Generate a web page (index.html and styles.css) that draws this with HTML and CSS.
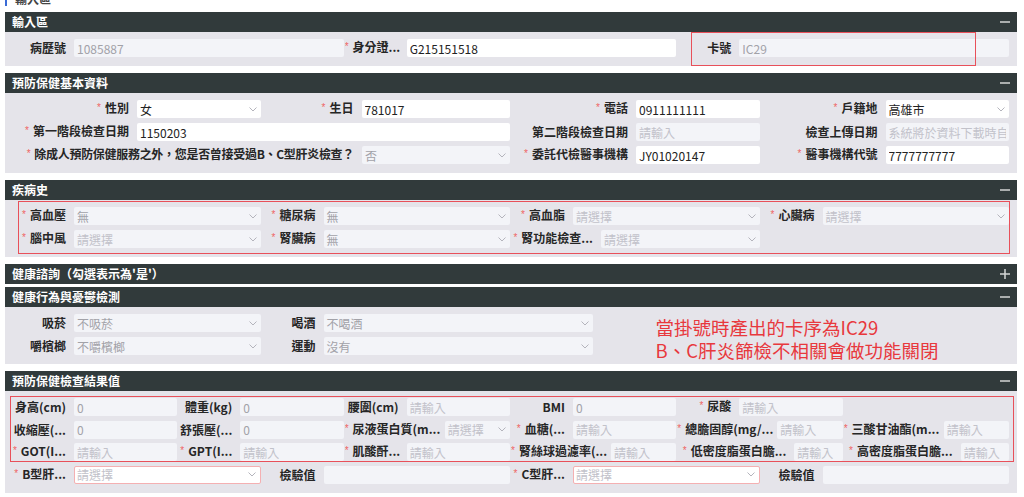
FILE: index.html
```html
<!DOCTYPE html>
<html lang="zh-Hant">
<head>
<meta charset="utf-8">
<title>預防保健</title>
<link rel="stylesheet" href="styles.css">
</head>
<body>
<div class="page">
  <div class="crumb"><span class="crumb-text">輸入區</span></div>

  <section class="panel">
    <header class="phead"><span>輸入區</span><svg class="tog" viewBox="0 0 10 10"><path d="M0 5H10"/></svg></header>
    <div class="pbody">
      <div class="grid g3">
        <div class="field"><label class="lbl">病歷號</label><input class="inp" disabled value="1085887"></div>
        <div class="field"><label class="lbl req">身分證...</label><input class="inp" value="G215151518"></div>
        <div class="field"><label class="lbl">卡號</label><input class="inp" disabled value="IC29"></div>
      </div>
      <div class="mark mark-card"></div>
    </div>
  </section>

  <section class="panel">
    <header class="phead"><span>預防保健基本資料</span><svg class="tog" viewBox="0 0 10 10"><path d="M0 5H10"/></svg></header>
    <div class="pbody">
      <div class="grid g4">
        <div class="field"><label class="lbl req w125">性別</label><div class="sel"><span>女</span><svg class="chev" viewBox="0 0 8 5"><path d="M0.5 0.5L4 4L7.5 0.5"/></svg></div></div>
        <div class="field"><label class="lbl req w100">生日</label><input class="inp" value="781017"></div>
        <div class="field"><label class="lbl req w125">電話</label><input class="inp" value="0911111111"></div>
        <div class="field"><label class="lbl req w125">戶籍地</label><div class="sel"><span>高雄市</span><svg class="chev" viewBox="0 0 8 5"><path d="M0.5 0.5L4 4L7.5 0.5"/></svg></div></div>

        <div class="field span2"><label class="lbl req w125">第一階段檢查日期</label><input class="inp" value="1150203"></div>
        <div class="field"><label class="lbl w125">第二階段檢查日期</label><input class="inp" disabled placeholder="請輸入"></div>
        <div class="field"><label class="lbl w125">檢查上傳日期</label><input class="inp" disabled placeholder="系統將於資料下載時自動產生"></div>

        <div class="field span2"><label class="lbl req w350">除成人預防保健服務之外，您是否曾接受過B、C型肝炎檢查？</label><div class="sel dis"><span>否</span><svg class="chev" viewBox="0 0 8 5"><path d="M0.5 0.5L4 4L7.5 0.5"/></svg></div></div>
        <div class="field"><label class="lbl req w125">委託代檢醫事機構</label><input class="inp" value="JY01020147"></div>
        <div class="field"><label class="lbl req w125">醫事機構代號</label><input class="inp" value="7777777777"></div>
      </div>
    </div>
  </section>

  <section class="panel">
    <header class="phead"><span>疾病史</span><svg class="tog" viewBox="0 0 10 10"><path d="M0 5H10"/></svg></header>
    <div class="pbody">
      <div class="grid g4">
        <div class="field"><label class="lbl req">高血壓</label><div class="sel dis"><span>無</span><svg class="chev" viewBox="0 0 8 5"><path d="M0.5 0.5L4 4L7.5 0.5"/></svg></div></div>
        <div class="field"><label class="lbl req">糖尿病</label><div class="sel dis"><span>無</span><svg class="chev" viewBox="0 0 8 5"><path d="M0.5 0.5L4 4L7.5 0.5"/></svg></div></div>
        <div class="field"><label class="lbl req">高血脂</label><div class="sel dis ph"><span>請選擇</span><svg class="chev" viewBox="0 0 8 5"><path d="M0.5 0.5L4 4L7.5 0.5"/></svg></div></div>
        <div class="field"><label class="lbl req">心臟病</label><div class="sel dis ph"><span>請選擇</span><svg class="chev" viewBox="0 0 8 5"><path d="M0.5 0.5L4 4L7.5 0.5"/></svg></div></div>

        <div class="field"><label class="lbl req">腦中風</label><div class="sel dis ph"><span>請選擇</span><svg class="chev" viewBox="0 0 8 5"><path d="M0.5 0.5L4 4L7.5 0.5"/></svg></div></div>
        <div class="field"><label class="lbl req">腎臟病</label><div class="sel dis"><span>無</span><svg class="chev" viewBox="0 0 8 5"><path d="M0.5 0.5L4 4L7.5 0.5"/></svg></div></div>
        <div class="field"><label class="lbl req w90">腎功能檢查...</label><div class="sel dis ph"><span>請選擇</span><svg class="chev" viewBox="0 0 8 5"><path d="M0.5 0.5L4 4L7.5 0.5"/></svg></div></div>
      </div>
      <div class="mark mark-disease"></div>
    </div>
  </section>

  <section class="panel collapsed">
    <header class="phead"><span>健康諮詢（勾選表示為'是'）</span><svg class="tog" viewBox="0 0 10 10"><path d="M0 5H10M5 0V10"/></svg></header>
  </section>

  <section class="panel">
    <header class="phead"><span>健康行為與憂鬱檢測</span><svg class="tog" viewBox="0 0 10 10"><path d="M0 5H10"/></svg></header>
    <div class="pbody">
      <div class="grid gbeh">
        <div class="field"><label class="lbl">吸菸</label><div class="sel dis"><span>不吸菸</span><svg class="chev" viewBox="0 0 8 5"><path d="M0.5 0.5L4 4L7.5 0.5"/></svg></div></div>
        <div class="field"><label class="lbl">喝酒</label><div class="sel dis"><span>不喝酒</span><svg class="chev" viewBox="0 0 8 5"><path d="M0.5 0.5L4 4L7.5 0.5"/></svg></div></div>
        <div class="note"><p class="note-line">當掛號時產出的卡序為IC29</p><p class="note-line">B、C肝炎篩檢不相關會做功能關閉</p></div>
        <div class="field"><label class="lbl">嚼檳榔</label><div class="sel dis"><span>不嚼檳榔</span><svg class="chev" viewBox="0 0 8 5"><path d="M0.5 0.5L4 4L7.5 0.5"/></svg></div></div>
        <div class="field"><label class="lbl">運動</label><div class="sel dis"><span>沒有</span><svg class="chev" viewBox="0 0 8 5"><path d="M0.5 0.5L4 4L7.5 0.5"/></svg></div></div>
      </div>
    </div>
  </section>

  <section class="panel">
    <header class="phead"><span>預防保健檢查結果值</span><svg class="tog" viewBox="0 0 10 10"><path d="M0 5H10"/></svg></header>
    <div class="pbody">
      <div class="grid g6">
        <div class="field"><label class="lbl">身高(cm)</label><input class="inp" disabled value="0"></div>
        <div class="field"><label class="lbl">體重(kg)</label><input class="inp" disabled value="0"></div>
        <div class="field"><label class="lbl">腰圍(cm)</label><input class="inp" disabled placeholder="請輸入"></div>
        <div class="field"><label class="lbl">BMI</label><input class="inp" disabled value="0"></div>
        <div class="field"><label class="lbl req">尿酸</label><input class="inp" disabled placeholder="請輸入"></div>
        <div class="field empty"></div>

        <div class="field"><label class="lbl">收縮壓(...</label><input class="inp" disabled value="0"></div>
        <div class="field"><label class="lbl">舒張壓(...</label><input class="inp" disabled value="0"></div>
        <div class="field"><label class="lbl req w100">尿液蛋白質(m...</label><div class="sel dis ph"><span>請選擇</span><svg class="chev" viewBox="0 0 8 5"><path d="M0.5 0.5L4 4L7.5 0.5"/></svg></div></div>
        <div class="field"><label class="lbl req">血糖(...</label><input class="inp" disabled placeholder="請輸入"></div>
        <div class="field"><label class="lbl req w100">總膽固醇(mg/...</label><input class="inp" disabled placeholder="請輸入"></div>
        <div class="field"><label class="lbl req w100">三酸甘油酯(m...</label><input class="inp" disabled placeholder="請輸入"></div>

        <div class="field"><label class="lbl req">GOT(I...</label><input class="inp" disabled placeholder="請輸入"></div>
        <div class="field"><label class="lbl req">GPT(I...</label><input class="inp" disabled placeholder="請輸入"></div>
        <div class="field"><label class="lbl req">肌酸酐...</label><input class="inp" disabled placeholder="請輸入"></div>
        <div class="field"><label class="lbl req w100">腎絲球過濾率(...</label><input class="inp" disabled placeholder="請輸入"></div>
        <div class="field"><label class="lbl req w117">低密度脂蛋白膽...</label><input class="inp" disabled placeholder="請輸入"></div>
        <div class="field"><label class="lbl req w117">高密度脂蛋白膽...</label><input class="inp" disabled placeholder="請輸入"></div>
      </div>
      <div class="grid g4 gsub">
        <div class="field"><label class="lbl req">B型肝...</label><div class="sel warn ph"><span>請選擇</span><svg class="chev" viewBox="0 0 8 5"><path d="M0.5 0.5L4 4L7.5 0.5"/></svg></div></div>
        <div class="field"><label class="lbl">檢驗值</label><input class="inp" disabled></div>
        <div class="field"><label class="lbl req">C型肝...</label><div class="sel warn ph"><span>請選擇</span><svg class="chev" viewBox="0 0 8 5"><path d="M0.5 0.5L4 4L7.5 0.5"/></svg></div></div>
        <div class="field"><label class="lbl">檢驗值</label><input class="inp" disabled></div>
      </div>
      <div class="mark mark-result"></div>
    </div>
  </section>
</div>
</body>
</html>
```

FILE: styles.css
```css
* { box-sizing: border-box; }

body {
  margin: 0;
  background: #ffffff;
  font-family: "Noto Sans CJK TC", "Noto Sans", sans-serif;
  font-size: 12px;
  color: #222222;
}

.page {
  padding: 0 7px 0 5px;
}

.crumb {
  height: 6px;
  overflow: hidden;
  display: flex;
  align-items: flex-end;
  margin-bottom: 6px;
}

.crumb-text {
  flex-shrink: 0;
  border-left: 2px solid #3a6bd6;
  padding-left: 8px;
  line-height: 14px;
  color: #444;
  font-weight: 700;
}

.panel {
  background: #e5e4ea;
  margin-bottom: 7px;
}

.panel.collapsed {
  margin-bottom: 3px;
}

.phead {
  height: 20px;
  background: #313a3b;
  color: #ffffff;
  font-weight: 700;
  display: flex;
  align-items: center;
  justify-content: space-between;
  padding: 0 7px;
  line-height: 20px;
}

.tog {
  width: 10px;
  height: 10px;
  fill: none;
  stroke: #d4d6d6;
  stroke-width: 1.5;
}

.pbody {
  position: relative;
  padding: 7px 7px 9px;
}

.grid {
  display: grid;
  row-gap: 5px;
  grid-auto-rows: 18px;
}

.g3 { grid-template-columns: repeat(3, 1fr); }
.g4 { grid-template-columns: repeat(4, 1fr); }
.g6 { grid-template-columns: repeat(6, 1fr); row-gap: 4.5px; }
.gsub { margin-top: 4.5px; }

.gbeh {
  grid-template-columns: 249.5px 332px 1fr;
  grid-template-rows: 18px 18px;
}

.span2 { grid-column: span 2; }

.field {
  display: flex;
  align-items: center;
  min-width: 0;
  height: 18px;
}

.lbl {
  flex: 0 0 62px;
  padding-right: 8px;
  text-align: right;
  white-space: nowrap;
  overflow: hidden;
  font-weight: 600;
  color: #262626;
  line-height: 18px;
}

.w90 { flex-basis: 90px; }
.w100 { flex-basis: 100px; }
.w117 { flex-basis: 117px; }
.w125 { flex-basis: 125px; }
.w350 { flex-basis: 350px; }

.w350 { letter-spacing: -0.3px; }

.req::before {
  content: "*";
  color: #ef6464;
  font-family: "Liberation Sans", sans-serif;
  font-weight: 400;
  font-size: 10px;
  margin-right: 4px;
  position: relative;
  top: -2px;
}

.inp {
  flex: 1;
  min-width: 0;
  width: 100%;
  height: 18px;
  margin: 0 1px 0 0;
  border: 0;
  border-radius: 2px;
  padding: 0 3px;
  font: inherit;
  color: #222222;
  background: #ffffff;
  outline: none;
}

.inp:disabled {
  background: #f3f4f8;
  color: #a2a2a8;
  -webkit-text-fill-color: #a2a2a8;
  opacity: 1;
}

.inp::placeholder {
  color: #c2c2ca;
  -webkit-text-fill-color: #c2c2ca;
}

.sel {
  flex: 1;
  min-width: 0;
  height: 18px;
  margin-right: 1px;
  border-radius: 2px;
  background: #ffffff;
  display: flex;
  align-items: center;
  justify-content: space-between;
  padding: 0 4px 0 3px;
  color: #222222;
  white-space: nowrap;
  overflow: hidden;
}

.sel.dis {
  background: #f3f4f8;
  color: #a2a2a8;
}

.sel.ph { color: #c2c2ca; }

.sel.warn {
  background: #ffffff;
  border: 1px solid #f4b0b2;
  padding-left: 2px;
}

.chev {
  flex: 0 0 8px;
  width: 8px;
  height: 5px;
  fill: none;
  stroke: #b4b4bc;
  stroke-width: 1;
}

.note {
  grid-column: 3;
  grid-row: 1 / 3;
  align-self: start;
  margin-top: 2px;
  padding-left: 62px;
  color: #e8383d;
  font-size: 18.5px;
  line-height: 23px;
  white-space: nowrap;
}

.note-line {
  margin: 0;
  height: 23px;
}

.mark {
  position: absolute;
  border: 1.5px solid #e8505a;
  pointer-events: none;
}

.mark-card { left: 686px; top: 0; width: 285px; height: 34px; }
.mark-disease { left: 13px; top: 1px; width: 992px; height: 53px; }
.mark-result { left: 5px; top: 5px; width: 1004px; height: 66px; }
```
